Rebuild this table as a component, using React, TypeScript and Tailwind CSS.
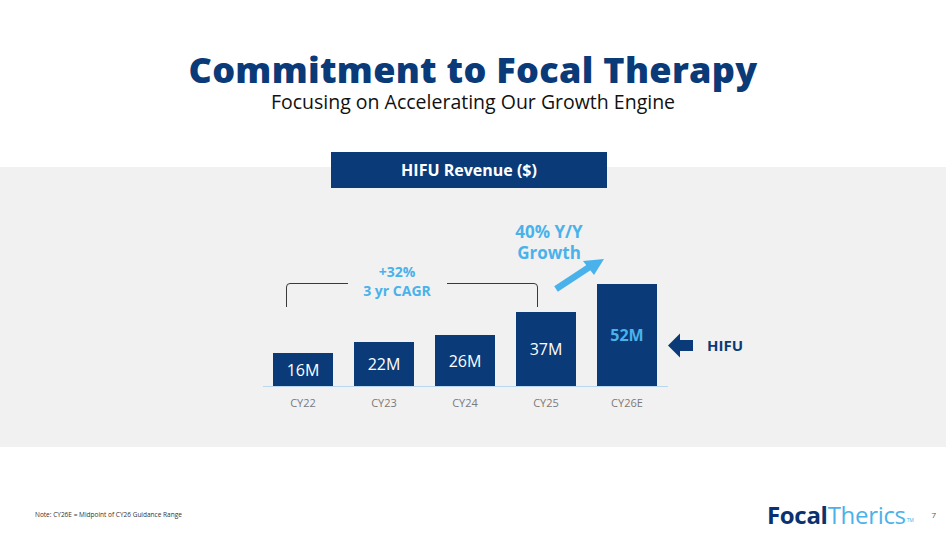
import React from "react";

const bars = [
  { year: "CY22", value: "16M", h: 33 },
  { year: "CY23", value: "22M", h: 44 },
  { year: "CY24", value: "26M", h: 51 },
  { year: "CY25", value: "37M", h: 74 },
  { year: "CY26E", value: "52M", h: 102, highlight: true },
];

export default function App() {
  return (
    <div
      className="relative flex h-[535px] w-full flex-col overflow-hidden bg-white"
      style={{ fontFamily: "'Open Sans', 'Liberation Sans', sans-serif" }}
    >
      <header className="flex flex-col items-center pt-[50px]">
        <h1 className="text-[36px] font-extrabold leading-[40px] tracking-[0.3px] text-[#0a3a78]">
          Commitment to Focal Therapy
        </h1>
        <p className="text-[19.5px] leading-6 text-[#111]">Focusing on Accelerating Our Growth Engine</p>
      </header>

      <section className="relative mt-[53px] h-[280px] shrink-0 bg-[#f1f1f1]">
        <div className="absolute left-[331px] top-[-15px] flex h-[36px] w-[276px] items-center justify-center bg-[#0a3b78] text-[16px] font-bold text-white">
          HIFU Revenue ($)
        </div>

        {/* chart canvas */}
        <div className="absolute left-[263px] top-[58px] h-[200px] w-[500px]">
          <svg className="absolute left-0 top-0" width="500" height="200" viewBox="0 0 500 200">
            {/* bracket */}
            <path d="M23.5 82 V62 Q23.5 58.5 27 58.5 H85" fill="none" stroke="#3a3a3a" strokeWidth="1" />
            <path d="M184 58.5 H271 Q274.5 58.5 274.5 62 V82" fill="none" stroke="#3a3a3a" strokeWidth="1" />
            {/* growth arrow */}
            <path d="M293 64 L328 41" stroke="#4ab2ea" strokeWidth="6.5" />
            <path d="M341 34 L320 36 L331 50 Z" fill="#4ab2ea" />
          </svg>

          <div className="absolute left-[84px] top-[37px] w-[100px] text-center text-[14px] font-bold leading-[19px] text-[#4ab2ea]">
            +32%
            <br />3 yr CAGR
          </div>
          <div className="absolute left-[226px] top-[-4px] w-[120px] text-center text-[17px] font-bold leading-[21px] text-[#4ab2ea]">
            40% Y/Y
            <br />
            Growth
          </div>

          {/* bars */}
          <div className="absolute bottom-[38px] left-0 flex w-[405px] items-end gap-[21px] border-b border-[#b9d7ef] pl-[10px]">
            {bars.map((b) => (
              <div
                key={b.year}
                className="flex w-[60px] items-center justify-center bg-[#0a3b78]"
                style={{ height: b.h }}
              >
                <span
                  className={
                    b.highlight
                      ? "text-[16px] font-bold text-[#4ab2ea]"
                      : "text-[16px] font-normal text-white"
                  }
                >
                  {b.value}
                </span>
              </div>
            ))}
          </div>
          <div className="absolute bottom-[15px] left-0 flex w-[405px] gap-[21px] pl-[10px]">
            {bars.map((b) => (
              <div key={b.year} className="w-[60px] text-center text-[11px] leading-[15px] text-[#7a7a7a]">
                {b.year}
              </div>
            ))}
          </div>

          {/* HIFU pointer */}
          <div className="absolute left-[405px] top-[108px] flex items-center gap-[14px]">
            <svg width="25" height="25" viewBox="0 0 25 25">
              <path d="M0 12.5 L12 0.5 V7 H25 V18 H12 V24.5 Z" fill="#0a3b78" />
            </svg>
            <span className="text-[15px] font-bold text-[#0a3b78]">HIFU</span>
          </div>
        </div>
      </section>

      <footer className="flex flex-1 items-end justify-between pb-[8px] pl-[35px] pr-[10px]">
        <span className="mb-[7px] text-[6.5px] text-[#333]">Note: CY26E = Midpoint of CY26 Guidance Range</span>
        <div className="flex items-end gap-[18px]">
          <span className="text-[24px] leading-none tracking-[-0.3px]">
            <span className="font-bold text-[#0a3270]">Focal</span>
            <span className="font-normal text-[#4ab2ea]">Therics</span>
            <sup className="ml-[1px] text-[5px] text-[#4ab2ea]">TM</sup>
          </span>
          <span className="mb-[6px] text-[8px] text-[#555]">7</span>
        </div>
      </footer>
    </div>
  );
}
